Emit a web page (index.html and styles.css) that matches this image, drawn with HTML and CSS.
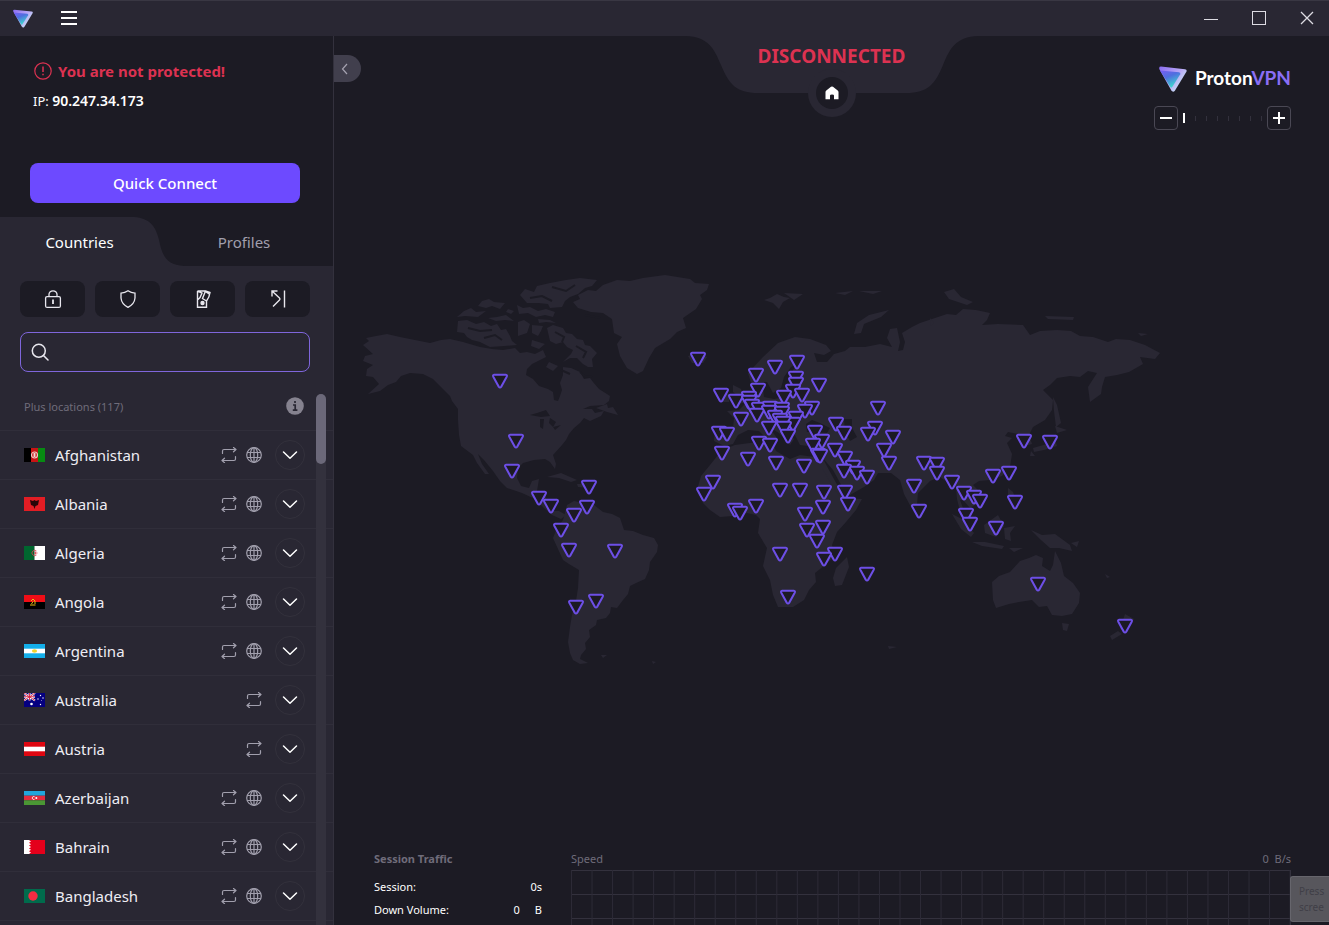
FILE: index.html
```html
<!DOCTYPE html>
<html lang="en">
<head>
<meta charset="utf-8">
<title>Proton VPN</title>
<link rel="stylesheet" href="styles.css">
</head>
<body>
<svg class="sprite" aria-hidden="true">
  <defs>
    <linearGradient id="lg-face" x1="0" y1="0" x2="0.5" y2="1">
      <stop offset="0" stop-color="#7a5cf5"/><stop offset="0.45" stop-color="#4f6fdf"/><stop offset="1" stop-color="#3fd8cf"/>
    </linearGradient>
    <linearGradient id="lg-edge" x1="0" y1="0" x2="1" y2="0.7">
      <stop offset="0" stop-color="#8a6cf0"/><stop offset="0.6" stop-color="#b9a8f7"/><stop offset="1" stop-color="#c9f3f2"/>
    </linearGradient>
    <symbol id="logo" viewBox="0 0 28 26">
      <path d="M2 .6 26 3.200Q28.400 3.600 27.400 5.800L16 24.400Q14 27 12.200 24.200L.4 3.200Q-.4.600 2 .6Z" fill="url(#lg-edge)"/>
      <path d="M1 4.500 20 6.200Q22 6.500 21.200 8.300L13.400 20.800Q12.400 22.400 11.400 20.900Z" fill="url(#lg-face)"/>
    </symbol>
    <symbol id="swap" viewBox="0 0 16 16">
      <path d="M1.500 6.500V4Q1.500 2.500 3 2.500H15M12.500.5 15 2.500 12.500 4.800M14.500 9.500V12Q14.500 13.500 13 13.500H1M3.500 11.200 1 13.500 3.500 15.700" fill="none" stroke="currentColor" stroke-width="1.200" stroke-linecap="round" stroke-linejoin="round"/>
    </symbol>
    <symbol id="globe" viewBox="0 0 16 16">
      <g fill="none" stroke="currentColor" stroke-width="1.200"><circle cx="8" cy="8" r="7.300"/><ellipse cx="8" cy="8" rx="3.700" ry="7.300"/><path d="M8 .7V15.300M1 5.500H15M1 10.500H15"/></g>
    </symbol>
    <symbol id="chev" viewBox="0 0 16 16">
      <path d="M1.500 5 8 11.200 14.500 5" fill="none" stroke="currentColor" stroke-width="1.500" stroke-linecap="round" stroke-linejoin="round"/>
    </symbol>
    <marker id="pin" viewBox="-9 -9 18 18" markerWidth="18" markerHeight="18" markerUnits="userSpaceOnUse">
      <path d="M-5.800-6.300H5.800Q7.600-6 6.700-4.200L1.300 5.600Q0 7.300-1.300 5.600L-6.700-4.200Q-7.600-6-5.800-6.300Z" fill="#1c1a24" stroke="#6d4fe6" stroke-width="2"/>
    </marker>
  </defs>
</svg>

<header class="titlebar">
  <svg class="app-logo"><use href="#logo"/></svg>
  <button class="icon-btn" aria-label="Menu"><svg width="16" height="16"><path d="M0 2H16M0 8H16M0 14H16" stroke="#fff" stroke-width="2"/></svg></button>
  <div class="window-buttons">
    <button class="icon-btn" aria-label="Minimize"><svg width="14" height="14"><path d="M0 8.500H14" stroke="#dddce3"/></svg></button>
    <button class="icon-btn" aria-label="Maximize"><svg width="14" height="14"><rect x=".5" y=".5" width="13" height="13" fill="none" stroke="#dddce3"/></svg></button>
    <button class="icon-btn" aria-label="Close"><svg width="14" height="14"><path d="M1 1 13 13M13 1 1 13" stroke="#dddce3" stroke-width="1.300"/></svg></button>
  </div>
</header>

<div class="app">
  <aside class="sidebar">
    <section class="protection">
      <p class="alert"><svg width="18" height="18"><circle cx="9" cy="9" r="8.200" fill="none" stroke="#dc3251" stroke-width="1.200"/><path d="M9 4.500V10M9 11.800V13.300" stroke="#dc3251" stroke-width="1.500"/></svg>You are not protected!</p>
      <p class="ip">IP: <b>90.247.34.173</b></p>
      <button class="quick">Quick Connect</button>
    </section>

    <nav class="tabs">
      <svg class="tab-shape" viewBox="0 0 190 49"><path d="M0 0H134C150 1 156 10 159 23C162 38 166 48 184 49H0Z" fill="#292733"/></svg>
      <button class="tab active">Countries</button>
      <button class="tab">Profiles</button>
    </nav>

    <div class="panel">
      <div class="filters">
        <button aria-label="Secure Core"><svg width="18" height="20" viewBox="0 0 18 20"><g fill="none" stroke="#e8e7ee" stroke-width="1.300"><rect x="1.600" y="7.600" width="14.800" height="10.800" rx="1.500"/><path d="M5 7.500V5.200Q5.500 1.800 9 1.800T13 5.200V7.500"/></g><path d="M9 10.500V15" stroke="#e8e7ee" stroke-width="1.800"/></svg></button>
        <button aria-label="NetShield"><svg width="18" height="20" viewBox="0 0 18 20"><path d="M9 1.700Q12 3.800 16 4.200V9Q15.500 15 9 18.300Q2.500 15 2 9V4.200Q6 3.800 9 1.700Z" fill="none" stroke="#e8e7ee" stroke-width="1.300"/></svg></button>
        <button aria-label="Kill Switch"><svg width="18" height="20" viewBox="0 0 18 20"><g fill="none" stroke="#e8e7ee" stroke-width="1.400"><path d="M3.500 2V18.300H12.500V12Q15.500 8 16 3.500L11.500 2H3.500L8 4 6 8.500 4 10.500M11.500 2 8.500 9.500 12.500 12M12 3 16 5.500"/><circle cx="8.500" cy="14" r="1.500" fill="#e8e7ee"/></g></svg></button>
        <button aria-label="Port Forwarding"><svg width="18" height="20" viewBox="0 0 18 20"><path d="M15.500 1.500V18.500M4 17.500 10.500 11Q11.500 10 10.500 9L3 2M3 7.500V2H8.500" fill="none" stroke="#e8e7ee" stroke-width="1.400"/></svg></button>
      </div>
      <label class="search"><svg width="18" height="18" viewBox="0 0 18 18"><g fill="none" stroke="#e8e7ee" stroke-width="1.500" stroke-linecap="round"><circle cx="7.800" cy="7.800" r="6.500"/><path d="M12.500 12.500 17 17"/></g></svg><input type="text" aria-label="Search countries"></label>

      <div class="locations">
        <div class="group"><span>Plus locations (117)</span><button class="icon-btn" aria-label="Information"><svg width="18" height="18"><circle cx="9" cy="9" r="8.800" fill="#85828f"/><path d="M9 4V6M7 8H9.200V13M6.800 13.200H11.400" fill="none" stroke="#292733" stroke-width="1.700"/></svg></button></div>
        <ul class="rows">
          <li><svg class="flag" viewBox="0 0 21 14"><path fill="#000" d="M0 0H7V14H0Z"/><path fill="#c81414" d="M7 0H14V14H7Z"/><path fill="#078a12" d="M14 0H21V14H14Z"/><circle cx="10.500" cy="7" r="3" fill="none" stroke="#f0c9c4" stroke-width="1.200"/><path d="M9.500 5H11.500V9H9.500Z" fill="#f0d8d4"/></svg><span>Afghanistan</span><svg class="ic"><use href="#swap"/></svg><svg class="ic"><use href="#globe"/></svg><button aria-label="Expand Afghanistan"><svg class="cv"><use href="#chev"/></svg></button></li>
          <li><svg class="flag" viewBox="0 0 21 14"><path fill="#e21d24" d="M0 0H21V14H0Z"/><path d="M6 3 9 4 10.500 3 12 4 15 3 14 8 11.500 9 10.500 12 9.500 9 7 8Z" fill="#260608"/></svg><span>Albania</span><svg class="ic"><use href="#swap"/></svg><svg class="ic"><use href="#globe"/></svg><button aria-label="Expand Albania"><svg class="cv"><use href="#chev"/></svg></button></li>
          <li><svg class="flag" viewBox="0 0 21 14"><path fill="#00662f" d="M0 0H10.500V14H0Z"/><path fill="#fff" d="M10.500 0H21V14H10.500Z"/><path d="M12.500 5A2.700 2.700 0 1 0 12.500 9M10 7H13.500M11.500 5.500V8.500" fill="none" stroke="#d4424d" stroke-width=".8"/></svg><span>Algeria</span><svg class="ic"><use href="#swap"/></svg><svg class="ic"><use href="#globe"/></svg><button aria-label="Expand Algeria"><svg class="cv"><use href="#chev"/></svg></button></li>
          <li><svg class="flag" viewBox="0 0 21 14"><path fill="#f00d16" d="M0 0H21V7H0Z"/><path d="M0 7H21V14H0Z"/><path d="M7 6 9 4 11 6V9M6 10H11.500M7.500 9 9 6.500" fill="none" stroke="#e9bd12"/></svg><span>Angola</span><svg class="ic"><use href="#swap"/></svg><svg class="ic"><use href="#globe"/></svg><button aria-label="Expand Angola"><svg class="cv"><use href="#chev"/></svg></button></li>
          <li><svg class="flag" viewBox="0 0 21 14"><path fill="#13aee9" d="M0 0H21V14H0Z"/><path fill="#fff" d="M0 4.700H21V9.300H0Z"/><ellipse cx="10.500" cy="7" rx="2.600" ry="1.700" fill="#f1d32a"/></svg><span>Argentina</span><svg class="ic"><use href="#swap"/></svg><svg class="ic"><use href="#globe"/></svg><button aria-label="Expand Argentina"><svg class="cv"><use href="#chev"/></svg></button></li>
          <li><svg class="flag" viewBox="0 0 21 14"><path fill="#050080" d="M0 0H21V14H0Z"/><path d="M0 0 11 7.500M11 0 0 7.500M5.500 0V7.500M0 3.700H11" stroke="#fff" stroke-width="2"/><path d="M5.500 0V7.500M0 3.700H11M0 0 11 7.500M11 0 0 7.500" stroke="#d51f3f" stroke-width=".9"/><g fill="#fff"><circle cx="7.500" cy="11" r="1.300"/><circle cx="16.500" cy="2.500" r=".7"/><circle cx="14" cy="6" r=".7"/><circle cx="19" cy="5" r=".7"/><circle cx="16.500" cy="11.500" r=".7"/><circle cx="17.500" cy="7.500" r=".4"/></g></svg><span>Australia</span><svg class="ic"><use href="#swap"/></svg><button aria-label="Expand Australia"><svg class="cv"><use href="#chev"/></svg></button></li>
          <li><svg class="flag" viewBox="0 0 21 14"><path fill="#df0711" d="M0 0H21V14H0Z"/><path fill="#fff" d="M0 4.700H21V9.300H0Z"/></svg><span>Austria</span><svg class="ic"><use href="#swap"/></svg><button aria-label="Expand Austria"><svg class="cv"><use href="#chev"/></svg></button></li>
          <li><svg class="flag" viewBox="0 0 21 14"><path fill="#20a6dc" d="M0 0H21V4.700H0Z"/><path fill="#e42b3d" d="M0 4.700H21V9.300H0Z"/><path fill="#4a9734" d="M0 9.300H21V14H0Z"/><path d="M10.500 5.700A1.500 1.500 0 1 0 10.500 8.300" fill="none" stroke="#fff" stroke-width=".9"/><circle cx="12.300" cy="7" r="1" fill="#fff"/></svg><span>Azerbaijan</span><svg class="ic"><use href="#swap"/></svg><svg class="ic"><use href="#globe"/></svg><button aria-label="Expand Azerbaijan"><svg class="cv"><use href="#chev"/></svg></button></li>
          <li><svg class="flag" viewBox="0 0 21 14"><path fill="#e4001b" d="M0 0H21V14H0Z"/><path fill="#fff" d="M0 0H5L7 1.400 5 2.800 7 4.200 5 5.600 7 7 5 8.400 7 9.800 5 11.200 7 12.600 5 14H0Z"/></svg><span>Bahrain</span><svg class="ic"><use href="#swap"/></svg><svg class="ic"><use href="#globe"/></svg><button aria-label="Expand Bahrain"><svg class="cv"><use href="#chev"/></svg></button></li>
          <li><svg class="flag" viewBox="0 0 21 14"><path fill="#006b4c" d="M0 0H21V14H0Z"/><circle cx="9" cy="7" r="4.700" fill="#f62c42"/></svg><span>Bangladesh</span><svg class="ic"><use href="#swap"/></svg><svg class="ic"><use href="#globe"/></svg><button aria-label="Expand Bangladesh"><svg class="cv"><use href="#chev"/></svg></button></li>
        </ul>
        <div class="scroll"><div class="thumb"></div></div>
      </div>
    </div>
  </aside>

  <main class="stage">
    <div class="stage-top">
      <button class="collapse" aria-label="Collapse sidebar"><svg width="8" height="12"><path d="M6 1 1.500 6 6 11" fill="none" stroke="#a5a2b0" stroke-width="1.200"/></svg></button>
      <div class="status">
        <svg class="notch" viewBox="0 0 292 82"><path d="M0 0C22 1 28 12 35 29C43 48 50 57 72 57H122.600A24 24 0 0 0 169.400 57H220C242 57 249 48 257 29C264 12 270 1 292 0Z" fill="#292733"/><circle cx="146" cy="57" r="24" fill="#292733"/></svg>
        <strong>DISCONNECTED</strong>
        <button class="home" aria-label="Home"><svg width="14" height="14"><path d="M.5 6Q.5 5 1.300 4.400L6 .8Q7 .2 8 .8L12.700 4.400Q13.500 5 13.500 6V13.300H9V9.500Q9 8.500 7 8.500T5 9.500V13.300H.5Z" fill="#fff"/></svg></button>
      </div>
      <div class="brand">
        <div class="wordmark"><svg class="brand-logo"><use href="#logo"/></svg><span>Proton<em>VPN</em></span></div>
        <div class="zoom">
          <button aria-label="Zoom out"><svg width="12" height="12"><path d="M0 6H12" stroke="#fff" stroke-width="2"/></svg></button>
          <div class="ticks"><i></i><i></i><i></i><i></i><i></i><i></i><i></i><i></i></div>
          <button aria-label="Zoom in"><svg width="12" height="12"><path d="M0 6H12M6 0V12" stroke="#fff" stroke-width="2"/></svg></button>
        </div>
      </div>
    </div>

    <svg class="map" viewBox="334 136 995 710" role="img" aria-label="World map of server locations">
      <g fill="#292733">
        <path d="M363 345 369 341 366 338 376 336 387 334 400 337 415 340 430 343 441 340 450 339 463 342 480 347 492 349 503 350 515 348 520 353 527 352 535 354 543 350 546 357 538 361 532 364 527 369 526 375 533 379 539 386 548 389 553 392 554 400 558 401 560 396 562 390 560 383 563 375 563 367 571 368 580 372 584 379 590 378 593 382 599 389 610 396 609 401 604 405 590 406 583 409 592 409 595 413 604 411 601 416 590 421 584 418 580 423 574 428 569 434 566 440 562 445 553 455 556 464 555 469 550 462 545 459 534 460 523 463 518 468 517 478 521 486 529 488 532 481 539 479 537 491 545 493 547 503 552 511 559 511 566 515 561 519 552 515 544 508 535 499 522 493 507 488 500 481 493 471 484 460 478 454 482 464 489 474 485 474 477 463 473 455 461 446 459 435 458 420 458 409 452 401 450 396 441 387 433 379 423 374 410 373 401 376 396 382 388 385 380 391 368 394 379 384 373 377 366 376 367 369 373 365 363 361 365 356 373 354Z"/>
        <path d="M573 302 580 299 578 295 588 290 596 291 603 285 617 280 630 281 643 278 665 275 690 279 695 283 709 284 707 290 700 295 702 299 696 309 683 318 686 328 677 332 670 339 655 348 649 358 643 371 637 374 627 368 620 356 617 344 622 337 614 333 612 319 603 313 591 312 578 308Z"/>
        <path d="M520 295 525 289 534 292 537 286 550 283 566 280 580 278 597 280 592 286 585 288 578 294 570 297 565 301 562 307 550 308 548 304 538 303 527 303Z"/>
        <path d="M547 328 553 325 563 328 566 333 572 334 577 339 583 340 585 345 590 346 597 353 592 359 593 367 588 367 583 364 577 358 570 358 563 362 571 354 573 350 567 347 563 342 556 344 550 341Z"/>
        <path d="M458 321 467 320 476 324 484 322 491 326 497 324 501 330 506 329 510 336 512 341 517 345 504 346 490 347 480 342 472 340 467 337 464 333 457 332Z"/>
        <path d="M457 317 464 311 471 308 476 312 486 311 478 317 465 316ZM478 306 482 301 489 299 494 302 505 303 500 309 492 306 486 308ZM488 318 497 317 506 315 514 321 505 320 496 321ZM517 305 523 308 530 307 538 311 546 309 555 312 553 317 545 315 536 317 528 313 519 314ZM518 322 524 320 530 324 527 333 518 336ZM532 325 543 326 541 331 538 336 532 333ZM532 340 545 344 539 349 531 346ZM549 362 558 366 553 371 546 367ZM596 408 607 404 608 408 613 407 618 415 607 412ZM547 477 561 473 577 480 571 482 559 478ZM577 484 590 484 589 488 578 487ZM508 309 514 311 511 314 506 312ZM538 319 550 320 556 323 546 322 539 323Z"/>
        <path d="M567 505 574 501 583 503 594 505 603 512 612 514 620 518 624 530 633 531 643 535 654 538 658 545 657 552 650 562 649 570 645 579 636 583 630 586 628 594 623 600 617 608 611 607 610 613 606 618 597 620 596 625 589 630 590 637 585 643 586 649 581 655 580 659 588 663 580 664 573 660 570 653 568 642 570 627 572 615 576 601 578 588 579 570 569 564 563 560 558 549 553 538 557 528 563 520Z"/>
        <path d="M722 450 735 445 757 442 772 442 776 451 790 459 800 455 822 458 828 470 835 485 845 498 862 499 856 510 846 522 837 532 832 545 835 556 825 565 815 573 816 582 809 590 804 600 793 607 778 607 773 595 770 580 763 566 767 548 758 533 760 519 756 515 747 513 733 516 720 517 710 510 703 503 697 490 701 476 710 465Z"/>
        <path d="M847 557 849 567 842 585 835 586 833 578 836 568Z"/>
        <path d="M715 427 733 428 734 418 727 411 739 410 747 402 757 396 757 386 763 388 764 397 774 399 790 396 797 388 802 381 793 378 793 370 800 362 791 367 784 377 781 388 773 393 767 382 760 382 751 383 748 373 763 357 778 343 795 337 810 339 826 345 831 351 824 355 814 353 817 362 827 362 834 354 845 351 850 347 865 347 880 344 892 347 887 338 890 329 897 328 900 342 898 351 903 350 905 342 902 333 912 327 920 323 932 319 947 314 956 315 963 309 976 310 990 313 987 320 982 325 998 324 1023 325 1030 335 1040 331 1057 330 1071 331 1080 336 1093 337 1108 342 1116 339 1130 340 1145 345 1160 353 1155 359 1140 357 1143 364 1129 372 1117 375 1105 377 1102 387 1101 394 1090 402 1088 387 1097 373 1088 371 1080 377 1070 376 1057 378 1050 385 1043 390 1053 400 1052 410 1045 420 1033 427 1029 435 1032 444 1025 446 1018 434 1008 432 1005 436 1012 438 1007 443 1012 454 1010 467 1002 476 990 480 979 481 973 485 982 494 980 502 970 508 963 500 960 500 964 511 971 520 971 526 965 522 960 511 957 499 956 487 947 482 940 477 930 481 918 493 917 505 912 509 904 494 900 480 891 473 878 473 874 480 864 487 850 495 839 496 832 485 822 468 814 456 816 447 800 445 795 435 788 427 785 430 794 439 790 445 779 433 769 427 777 438 770 442 759 431 748 430 738 435 733 444 724 446 714 441Z"/>
        <path d="M733 385 741 389 746 402 735 405 738 396 733 392ZM723 393 730 394 729 402 721 402ZM688 356 698 353 707 357 703 363 692 363Z"/>
        <path d="M854 334 857 323 869 315 889 310 881 317 864 324 861 333ZM764 300 770 298 777 294 784 297 790 298 783 302 779 309 773 303ZM784 293 803 294 794 300ZM835 293 853 291 845 295ZM859 291 882 291 873 294ZM944 292 954 289 961 297 973 302 967 305 949 299ZM1045 316 1074 317 1073 320 1048 319ZM1138 333 1148 334 1141 336Z"/>
        <path d="M1053 397 1057 405 1061 423 1056 427 1054 411ZM1055 426 1067 430 1057 433ZM1054 437 1057 446 1044 450 1034 452 1033 448 1047 444ZM1031 451 1035 456 1030 456ZM1008 488 1013 492 1016 500 1008 497ZM952 514 962 519 974 533 971 537 961 529ZM972 542 985 542 1004 546 1002 549 982 546ZM984 525 998 515 1004 526 996 537 985 533ZM1004 528 1015 526 1010 533 1011 541 1005 539ZM1009 548 1023 548 1014 552Z"/>
        <path d="M1031 530 1042 535 1055 534 1070 545 1072 551 1059 548 1050 548 1041 540ZM1071 543 1079 541 1077 547Z"/>
        <path d="M992 582 999 576 1010 572 1020 561 1029 558 1036 555 1043 558 1042 566 1050 571 1053 565 1055 551 1061 563 1064 576 1073 583 1080 593 1079 603 1072 614 1062 616 1052 615 1047 606 1039 607 1032 600 1019 602 1009 604 996 608 993 600ZM1062 623 1069 624 1067 631 1063 630ZM1125 614 1134 619 1127 631 1120 629ZM1118 631 1122 634 1112 640 1110 636Z"/>
        <path d="M930 318 934 323 931 326ZM1105 574 1110 577 1107 578ZM601 655 607 655 603 658ZM652 661 656 662 653 664ZM888 646 897 647 889 649Z"/>
      </g>
      <path d="M806 424 812 420 820 423 830 428 827 433 816 432 807 432ZM844 419 852 419 852 428 857 437 850 441 845 432ZM530 415 537 413 546 410 550 416 541 417ZM540 419 544 419 543 429 540 427ZM550 418 556 422 553 427 549 423ZM553 427 561 425 555 430ZM822 457 829 470 840 490 845 492 833 470Z" fill="#1c1b24"/>
      <path class="cracks" d="M468 328 480 331 492 330M484 338 495 335 502 340M552 287 566 291 575 285M530 298 542 296 552 301M555 332 564 337 562 342M576 346 586 352 583 358M580 372 586 377 592 376M561 370 570 374M585 315 600 318"/>
      <path class="pins" marker-start="url(#pin)" marker-mid="url(#pin)" marker-end="url(#pin)" d="M500 381L516 441L512 471L589 487L539 498L551 506L587 507L574 515L561 530L569 550L615 551L576 607L596 601L713 482L704 494L735 510L740 513L698 359L775 367L797 362L756 375L796 378L796 384L819 385L758 390L721 395L793 391L802 395L784 397L736 401L749 398L749 402L752 406L812 408L805 411L759 409L770 408L757 415L741 419L782 409L769 412L782 413L775 417L780 420L796 418L793 424L783 423L784 428L769 428L788 436L719 433L727 434L759 443L770 445L722 453L748 459L776 463L804 466L815 432L822 441L813 445L818 455L820 456L836 424L844 433L835 450L845 458L853 467L844 471L857 473L867 477L878 408L875 428L868 434L893 437L884 450L889 463L914 486L924 463L937 464L937 473L952 482L780 490L800 490L824 492L845 492L848 504L756 506L823 507L805 514L823 527L807 530L817 541L780 554L835 554L824 559L867 574L788 597L919 511L964 493L974 497L980 501L966 515L970 524L996 528L993 476L1009 473L1015 502L1024 441L1050 442L1038 584L1125 626"/>
    </svg>

    <footer class="traffic">
      <section class="session">
        <h2>Session Traffic</h2>
        <dl>
          <div><dt>Session:</dt><dd>0s</dd></div>
          <div><dt>Down Volume:</dt><dd><span>0</span><span>B</span></dd></div>
        </dl>
      </section>
      <section class="speed">
        <div class="speed-head"><span>Speed</span><span class="rate">0&nbsp; B/s</span></div>
        <div class="chart"></div>
      </section>
      <div class="toast">Press<br>scree</div>
    </footer>
  </main>
</div>
</body>
</html>
```

FILE: styles.css
```css
:root {
  --bg: #1c1b24;
  --panel: #292733;
  --line: #33313d;
  --muted: #6f6c7a;
  --accent: #6d4aff;
  --danger: #dc3251;
}

* { box-sizing: border-box; }

body {
  margin: 0;
  height: 100vh;
  display: flex;
  flex-direction: column;
  overflow: hidden;
  background: var(--bg);
  color: #fff;
  font-family: "Noto Sans", "Open Sans", sans-serif;
  font-size: 15px;
}

button {
  border: 0;
  padding: 0;
  background: none;
  color: inherit;
  font: inherit;
}

svg { display: block; flex: none; }
p, h2, dl, dd, ul { margin: 0; padding: 0; }
.sprite { position: absolute; width: 0; height: 0; }
.icon-btn { display: flex; align-items: center; justify-content: center; }

/* Title bar */
.titlebar {
  flex: none;
  height: 36px;
  padding: 0 15px 1px 13px;
  display: flex;
  align-items: center;
  gap: 28px;
  background: var(--panel);
  border-top: 1px solid #393743;
}
.app-logo { width: 20px; height: 19px; }
.window-buttons { margin-left: auto; display: flex; gap: 34px; }

.app { flex: 1; min-height: 0; display: flex; }

/* Sidebar */
.sidebar {
  flex: none;
  width: 334px;
  display: flex;
  flex-direction: column;
  border-right: 1px solid var(--line);
}
.protection { padding: 24px 33px 14px 30px; }
.alert {
  display: flex;
  align-items: center;
  gap: 6px;
  padding-left: 4px;
  line-height: 22px;
  font-weight: 700;
  color: var(--danger);
}
.ip { padding-left: 3px; margin-top: 8px; font-size: 13px; line-height: 22px; }
.ip b { font-size: 14px; font-weight: 600; }
.quick {
  display: block;
  width: 100%;
  height: 40px;
  margin-top: 51px;
  border-radius: 8px;
  background: var(--accent);
  font-weight: 500;
}

.tabs { position: relative; display: grid; grid-template-columns: 159px 1fr; height: 49px; }
.tab-shape { position: absolute; left: 0; top: 0; width: 190px; height: 49px; }
.tab { position: relative; padding-right: 4px; color: #a19fad; }
.tab.active { padding-right: 0; color: #fff; }

.panel { flex: 1; min-height: 0; display: flex; flex-direction: column; padding-top: 15px; background: var(--panel); }
.filters { display: grid; grid-template-columns: repeat(4, 1fr); gap: 10px; margin: 0 23px 0 20px; }
.filters button { display: flex; align-items: center; justify-content: center; height: 36px; border-radius: 8px; background: var(--bg); }
.search {
  flex: none;
  display: flex;
  align-items: center;
  gap: 10px;
  height: 40px;
  margin: 15px 23px 22px 20px;
  padding: 0 10px;
  border: 1px solid #7f66dc;
  border-radius: 8px;
}
.search input { flex: 1; min-width: 0; border: 0; outline: 0; background: none; color: #fff; font: inherit; }

.locations { position: relative; flex: 1; min-height: 0; overflow: hidden; }
.group {
  display: flex;
  align-items: center;
  justify-content: space-between;
  height: 36px;
  padding: 0 29px 12px 24px;
  font-size: 11px;
  color: var(--muted);
}
.rows { list-style: none; border-bottom: 1px solid #302e3a; }
.rows li { display: flex; align-items: center; height: 49px; padding: 0 28px 0 24px; border-top: 1px solid #302e3a; }
.rows span { flex: 1; padding-left: 10px; color: #eeedf3; }
.flag { width: 21px; height: 14px; }
.ic { width: 16px; height: 16px; margin-left: 9px; color: #a19fad; }
.rows button {
  display: flex;
  align-items: center;
  justify-content: center;
  width: 30px;
  height: 30px;
  margin-left: 13px;
  border: 1px solid #33313c;
  border-radius: 50%;
}
.cv { width: 16px; height: 16px; }
.scroll { position: absolute; top: 0; bottom: 0; right: 7px; width: 10px; background: var(--line); border-radius: 5px 5px 0 0; }
.thumb { height: 70px; border-radius: 5px; background: #6b6879; }

/* Map stage */
.stage { flex: 1; min-width: 0; display: flex; flex-direction: column; }
.stage-top { flex: none; display: grid; grid-template-columns: 1fr auto 1fr; height: 100px; }
.collapse {
  display: flex;
  align-items: center;
  padding-left: 7px;
  width: 27px;
  height: 27px;
  margin-top: 19px;
  border-radius: 0 14px 14px 0;
  background: #413f4d;
}
.status { position: relative; width: 292px; display: flex; flex-direction: column; align-items: center; }
.notch { position: absolute; left: 0; top: 0; width: 292px; height: 82px; }
.status strong { position: relative; margin-top: 6px; font-size: 19px; line-height: 28px; font-weight: 700; color: var(--danger); }
.home { position: relative; display: flex; align-items: center; justify-content: center; width: 32px; height: 32px; margin-top: 7px; border-radius: 50%; background: var(--bg); }
.brand { justify-self: end; margin-right: 38px; padding-top: 30px; display: flex; flex-direction: column; align-items: flex-end; }
.wordmark { display: flex; align-items: center; gap: 8px; height: 26px; font-family: Lato, sans-serif; font-size: 19px; line-height: 24px; font-weight: 700; }
.wordmark em { font-style: normal; color: #8a6ef5; }
.wordmark span { padding-bottom: 2px; }
.brand-logo { width: 28px; height: 26px; }
.zoom { display: flex; align-items: center; margin-top: 14px; }
.zoom button { display: flex; align-items: center; justify-content: center; width: 24px; height: 24px; border: 1px solid #4a4854; border-radius: 4px; }
.ticks { display: flex; justify-content: space-between; align-items: center; width: 89px; padding: 0 5px; }
.ticks i { width: 1px; height: 5px; background: var(--line); }
.ticks i:first-child { width: 2px; height: 10px; background: #fff; }

.map { flex: 1; min-height: 0; width: 100%; }
.pins { fill: none; stroke: none; }
.cracks { fill: none; stroke: var(--bg); stroke-width: 2; }

/* Traffic statistics */
.traffic { position: relative; flex: none; display: flex; height: 79px; padding: 0 38px 0 40px; overflow: hidden; font-size: 11px; }
.session { width: 168px; margin-right: 29px; padding-top: 4px; }
.session h2 { font-size: 11px; line-height: 18px; font-weight: 700; color: var(--muted); }
.session dl { margin-top: 7px; }
.session dl div { display: flex; justify-content: space-between; line-height: 23px; }
.session dd { display: flex; gap: 15px; }
.speed { flex: 1; color: var(--muted); }
.speed-head { display: flex; justify-content: space-between; padding: 3px 0 1px; line-height: 20px; font-size: 11px; }
.chart {
  height: 120px;
  border-right: 1px solid var(--line);
  background-image: linear-gradient(to right, #2c2a36 1px, transparent 1px), linear-gradient(to bottom, var(--line) 1px, transparent 1px);
  background-size: calc(100% / 35) 24px;
}
.toast {
  position: absolute;
  right: 0;
  bottom: 3px;
  width: 39px;
  height: 46px;
  padding: 6px 0 0 8px;
  border: 1px solid #66656c;
  border-right: 0;
  border-radius: 3px 0 0 3px;
  background: #57565c;
  font-size: 10px;
  line-height: 16px;
  color: #403f47;
}
```
